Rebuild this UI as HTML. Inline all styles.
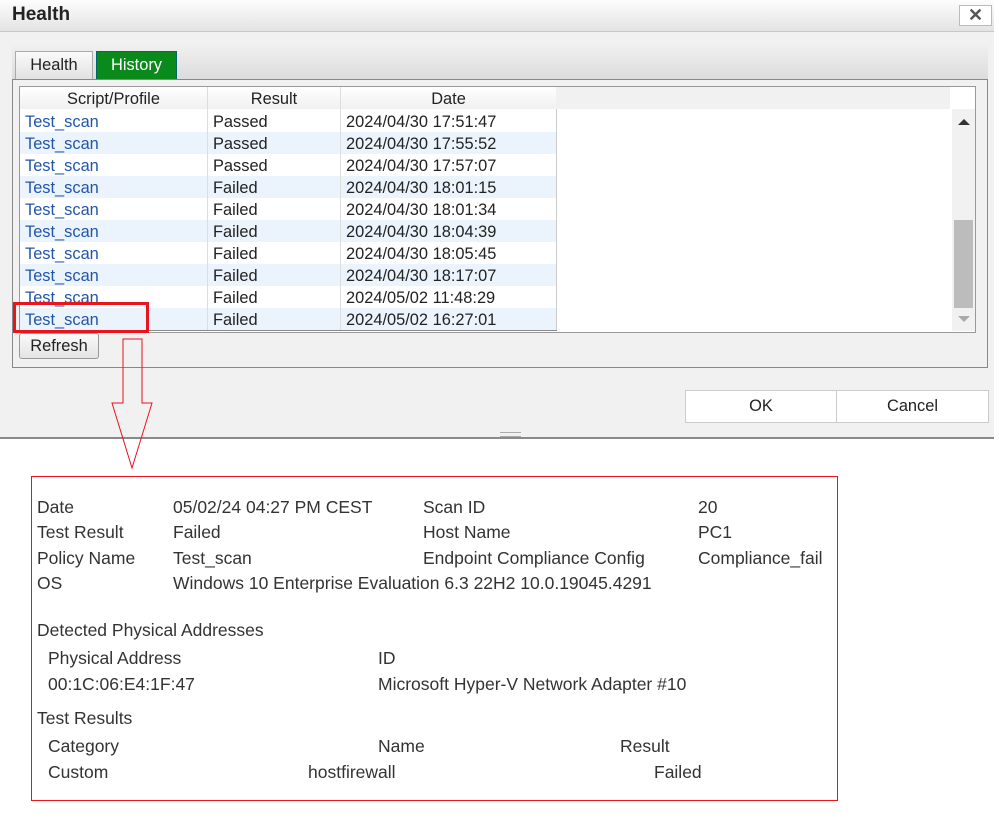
<!DOCTYPE html>
<html><head><style>
body{margin:0;width:999px;height:825px;position:relative;background:#fff;font-family:"Liberation Sans",Arial,sans-serif;overflow:hidden}
.a{position:absolute}
.t{position:absolute;font-size:17.5px;color:#333;white-space:nowrap;line-height:20px}
.row{position:absolute;left:20px;width:536px;height:22px;font-size:16.4px;line-height:24px}
.row span{position:absolute;top:0}
</style></head><body>
<div class="a" style="left:0;top:0;width:994px;height:437px;background:#f1f1f1;border-bottom:2px solid #8a8a8a"></div>
<div class="a" style="left:0;top:0;width:994px;height:31px;background:linear-gradient(#fdfdfd,#e3e3e3);border-bottom:1px solid #c8c8c8"></div>
<div class="a" style="left:12px;top:3px;font-size:19px;font-weight:bold;color:#222;line-height:24px">Health</div>
<div class="a" style="left:959px;top:5px;width:31px;height:19px;background:#fff;border:1px solid #bbb;font-size:18px;font-weight:bold;color:#555;text-align:center;line-height:19px">✕</div>
<div class="a" style="left:12px;top:40px;width:976px;height:39px;background:linear-gradient(#f3f3f3,#dcdcdc)"></div>
<div class="a" style="left:15px;top:51px;width:76px;height:27px;background:linear-gradient(#fafafa,#e2e2e2);border:1px solid #aaa;border-bottom:none;font-size:16.4px;color:#222;text-align:center;line-height:27px">Health</div>
<div class="a" style="left:96px;top:51px;width:79px;height:28px;background:#0a8a1a;border:1px solid #066;border-bottom:none;font-size:16.4px;color:#fff;text-align:center;line-height:27px">History</div>
<div class="a" style="left:12px;top:79px;width:974px;height:287px;border:1px solid #888;background:#f1f1f1"></div>
<div class="a" style="left:19px;top:86px;width:955px;height:245px;border:1px solid #999;background:#fff"></div>
<div class="a" style="left:20px;top:87px;width:930px;height:22px;background:#f1f1f1"></div>
<div class="a" style="left:20px;top:87px;width:536px;height:22px;background:linear-gradient(#fff,#f0f0f0)"></div>
<div class="a" style="left:952px;top:109px;width:23px;height:222px;background:#f1f1f1"></div>
<div class="a" style="left:954px;top:220px;width:19px;height:88px;background:#bcbcbc"></div>
<div class="a" style="left:958px;top:119px;width:0;height:0;border-left:6px solid transparent;border-right:6px solid transparent;border-bottom:6px solid #333"></div>
<div class="a" style="left:958px;top:316px;width:0;height:0;border-left:6px solid transparent;border-right:6px solid transparent;border-top:6px solid #aaa"></div>
<div class="row" style="top:87px;color:#222"><span style="left:0;width:187px;text-align:center">Script/Profile</span><span style="left:188px;width:132px;text-align:center">Result</span><span style="left:321px;width:215px;text-align:center">Date</span></div>
<div id="rows"></div>
<div class="a" style="left:207px;top:87px;width:1px;height:244px;background:#ddd"></div>
<div class="a" style="left:340px;top:87px;width:1px;height:244px;background:#ddd"></div>
<div class="a" style="left:556px;top:109px;width:1px;height:222px;background:#ccc"></div>
<div class="a" style="left:20px;top:330px;width:537px;height:1px;background:#888"></div>
<div class="a" style="left:13px;top:302px;width:130px;height:25px;border:3px solid #e8141e"></div>
<div class="a" style="left:19px;top:333px;width:78px;height:24px;border:1px solid #999;border-radius:3px;background:linear-gradient(#fafafa,#e4e4e4);font-size:16.4px;color:#222;text-align:center;line-height:24px">Refresh</div>
<div class="a" style="left:685px;top:390px;width:150px;height:31px;border:1px solid #ccc;background:#fff;font-size:16.4px;color:#222;text-align:center;line-height:31px">OK</div>
<div class="a" style="left:836px;top:390px;width:151px;height:31px;border:1px solid #ccc;background:#fff;font-size:16.4px;color:#222;text-align:center;line-height:31px">Cancel</div>
<div class="a" style="left:500px;top:432px;width:21px;height:3px;border-top:1px solid #aaa;border-bottom:1px solid #aaa"></div>
<svg class="a" style="left:0;top:0" width="999" height="825"><path d="M123 339H142V403H152L132 468L112 403H123Z" fill="none" stroke="#e8141e" stroke-width="1"/></svg>
<div class="a" style="left:31px;top:476px;width:805px;height:323px;border:1px solid #e8141e"></div>
<div class="t" style="left:37px;top:497px">Date</div><div class="t" style="left:173px;top:497px">05/02/24 04:27 PM CEST</div><div class="t" style="left:423px;top:497px">Scan ID</div><div class="t" style="left:698px;top:497px">20</div>
<div class="t" style="left:37px;top:522px">Test Result</div><div class="t" style="left:173px;top:522px">Failed</div><div class="t" style="left:423px;top:522px">Host Name</div><div class="t" style="left:698px;top:522px">PC1</div>
<div class="t" style="left:37px;top:548px">Policy Name</div><div class="t" style="left:173px;top:548px">Test_scan</div><div class="t" style="left:423px;top:548px">Endpoint Compliance Config</div><div class="t" style="left:698px;top:548px">Compliance_fail</div>
<div class="t" style="left:37px;top:573px">OS</div><div class="t" style="left:173px;top:573px">Windows 10 Enterprise Evaluation 6.3 22H2 10.0.19045.4291</div>
<div class="t" style="left:37px;top:620px">Detected Physical Addresses</div>
<div class="t" style="left:48px;top:648px">Physical Address</div><div class="t" style="left:378px;top:648px">ID</div>
<div class="t" style="left:48px;top:674px">00:1C:06:E4:1F:47</div><div class="t" style="left:378px;top:674px">Microsoft Hyper-V Network Adapter #10</div>
<div class="t" style="left:37px;top:708px">Test Results</div>
<div class="t" style="left:48px;top:736px">Category</div><div class="t" style="left:378px;top:736px">Name</div><div class="t" style="left:620px;top:736px">Result</div>
<div class="t" style="left:48px;top:762px">Custom</div><div class="t" style="left:308px;top:762px">hostfirewall</div><div class="t" style="left:654px;top:762px">Failed</div>
<script>
var d=[["Passed","2024/04/30 17:51:47"],["Passed","2024/04/30 17:55:52"],["Passed","2024/04/30 17:57:07"],["Failed","2024/04/30 18:01:15"],["Failed","2024/04/30 18:01:34"],["Failed","2024/04/30 18:04:39"],["Failed","2024/04/30 18:05:45"],["Failed","2024/04/30 18:17:07"],["Failed","2024/05/02 11:48:29"],["Failed","2024/05/02 16:27:01"]];
var h="";d.forEach(function(r,i){h+='<div class="row" style="top:'+(110+i*22)+'px;background:'+(i%2?'#ebf4fd':'#fff')+'"><span style="left:5px;color:#2255aa">Test_scan</span><span style="left:193px;color:#222">'+r[0]+'</span><span style="left:326px;color:#222">'+r[1]+'</span></div>';});
document.getElementById("rows").outerHTML=h;
</script>
</body></html>
